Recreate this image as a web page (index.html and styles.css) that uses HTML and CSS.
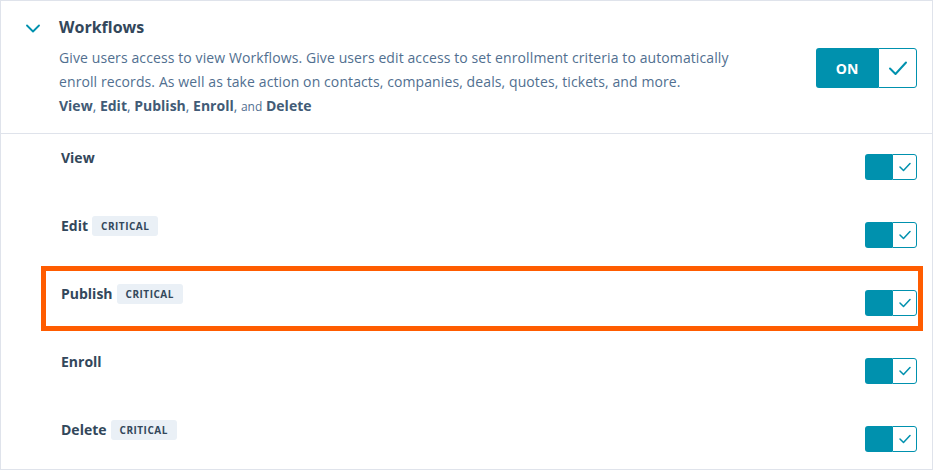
FILE: index.html
```html
<!DOCTYPE html>
<html>
<head>
<meta charset="utf-8">
<link rel="stylesheet" href="styles.css">
</head>
<body>
<div class="card">
  <div class="header">
    <div class="chev">
      <svg width="14" height="9" viewBox="0 0 14 9"><path d="M1 1.5 L7 7.5 L13 1.5" fill="none" stroke="#0091ae" stroke-width="1.8" stroke-linecap="round" stroke-linejoin="round"/></svg>
    </div>
    <div class="info">
      <div class="title">Workflows</div>
      <div class="desc">Give users access to view Workflows. Give users edit access to set enrollment criteria to automatically enroll records. As well as take action on contacts, companies, deals, quotes, tickets, and more.</div>
      <div class="perms"><b>View</b>, <b>Edit</b>, <b>Publish</b>, <b>Enroll</b>, <span class="and">and</span> <b>Delete</b></div>
    </div>
    <div class="big-toggle">
      <div class="on">ON</div>
      <div class="chk"><svg width="20" height="16" viewBox="0 0 20 16"><path d="M2 8.5 L7.5 14 L18 2.5" fill="none" stroke="#0091ae" stroke-width="2" stroke-linecap="round" stroke-linejoin="round"/></svg></div>
    </div>
  </div>
  <div class="row">
    <div class="label">View</div>
    <div class="toggle"><div class="fill"></div><div class="box"><svg width="12" height="10" viewBox="0 0 12 10"><path d="M1 5 L4.5 8.5 L11 1.5" fill="none" stroke="#0091ae" stroke-width="1.5" stroke-linecap="round" stroke-linejoin="round"/></svg></div></div>
  </div>
  <div class="row">
    <div class="label">Edit <span class="badge">CRITICAL</span></div>
    <div class="toggle"><div class="fill"></div><div class="box"><svg width="12" height="10" viewBox="0 0 12 10"><path d="M1 5 L4.5 8.5 L11 1.5" fill="none" stroke="#0091ae" stroke-width="1.5" stroke-linecap="round" stroke-linejoin="round"/></svg></div></div>
  </div>
  <div class="row highlighted">
    <div class="label">Publish <span class="badge">CRITICAL</span></div>
    <div class="toggle"><div class="fill"></div><div class="box"><svg width="12" height="10" viewBox="0 0 12 10"><path d="M1 5 L4.5 8.5 L11 1.5" fill="none" stroke="#0091ae" stroke-width="1.5" stroke-linecap="round" stroke-linejoin="round"/></svg></div></div>
    <div class="hl"></div>
  </div>
  <div class="row">
    <div class="label">Enroll</div>
    <div class="toggle"><div class="fill"></div><div class="box"><svg width="12" height="10" viewBox="0 0 12 10"><path d="M1 5 L4.5 8.5 L11 1.5" fill="none" stroke="#0091ae" stroke-width="1.5" stroke-linecap="round" stroke-linejoin="round"/></svg></div></div>
  </div>
  <div class="row">
    <div class="label">Delete <span class="badge">CRITICAL</span></div>
    <div class="toggle"><div class="fill"></div><div class="box"><svg width="12" height="10" viewBox="0 0 12 10"><path d="M1 5 L4.5 8.5 L11 1.5" fill="none" stroke="#0091ae" stroke-width="1.5" stroke-linecap="round" stroke-linejoin="round"/></svg></div></div>
  </div>
</div>
</body>
</html>
```

FILE: styles.css
```css
* { box-sizing: border-box; }
html, body { margin: 0; padding: 0; background: #fff; }
body { font-family: "Open Sans", "Noto Sans", sans-serif; color: #33475b; }
.card {
  width: 933px;
  height: 470px;
  border: 1px solid #dfe3eb;
  background: #fff;
}
.header {
  display: flex;
  align-items: flex-start;
  padding: 14px 15px 14px 25px;
  border-bottom: 1px solid #dfe3eb;
}
.chev { width: 33px; padding-top: 9px; }
.chev svg { display: block; }
.info { flex: 1; }
.title { font-size: 16px; font-weight: 700; line-height: 24px; color: #33475b; }
.desc { margin-top: 7px; font-size: 14px; line-height: 24px; color: #516f90; width: 690px; letter-spacing: 0.1px; }
.perms { font-size: 14px; line-height: 24px; color: #516f90; }
.perms b { font-weight: 700; color: #425b76; }
.perms .and { font-size: 12px; }
.big-toggle {
  display: flex;
  margin-top: 33px;
  width: 101px;
  height: 40px;
}
.big-toggle .on {
  width: 62px;
  background: #0091ae;
  color: #fff;
  font-weight: 700;
  font-size: 14px;
  display: flex;
  align-items: center;
  justify-content: center;
  border-radius: 3px 0 0 3px;
}
.big-toggle .chk {
  flex: 1;
  border: 1px solid #0091ae;
  border-radius: 0 3px 3px 0;
  display: flex;
  align-items: center;
  justify-content: center;
}
.row {
  display: flex;
  justify-content: space-between;
  align-items: flex-start;
  height: 68px;
  padding: 12px 15px 0 60px;
}
.highlighted { position: relative; }
.hl {
  position: absolute;
  left: 40px;
  top: -4px;
  width: 882px;
  height: 65px;
  border: 5px solid #ff5c00;
}
.label {
  font-size: 14px;
  font-weight: 700;
  line-height: 24px;
  color: #33475b;
  display: flex;
  align-items: center;
}
.badge {
  margin-left: 4px;
  background: #eaf0f6;
  border-radius: 3px;
  font-size: 10px;
  font-weight: 700;
  letter-spacing: 0.5px;
  line-height: 20px;
  height: 20px;
  padding: 0 9px;
  color: #33475b;
}
.toggle {
  display: flex;
  margin-top: 8px;
  width: 52px;
  height: 26px;
}
.toggle .fill {
  width: 27px;
  background: #0091ae;
  border-radius: 3px 0 0 3px;
}
.toggle .box {
  flex: 1;
  border: 1px solid #0091ae;
  border-radius: 0 3px 3px 0;
  display: flex;
  align-items: center;
  justify-content: center;
}
```
